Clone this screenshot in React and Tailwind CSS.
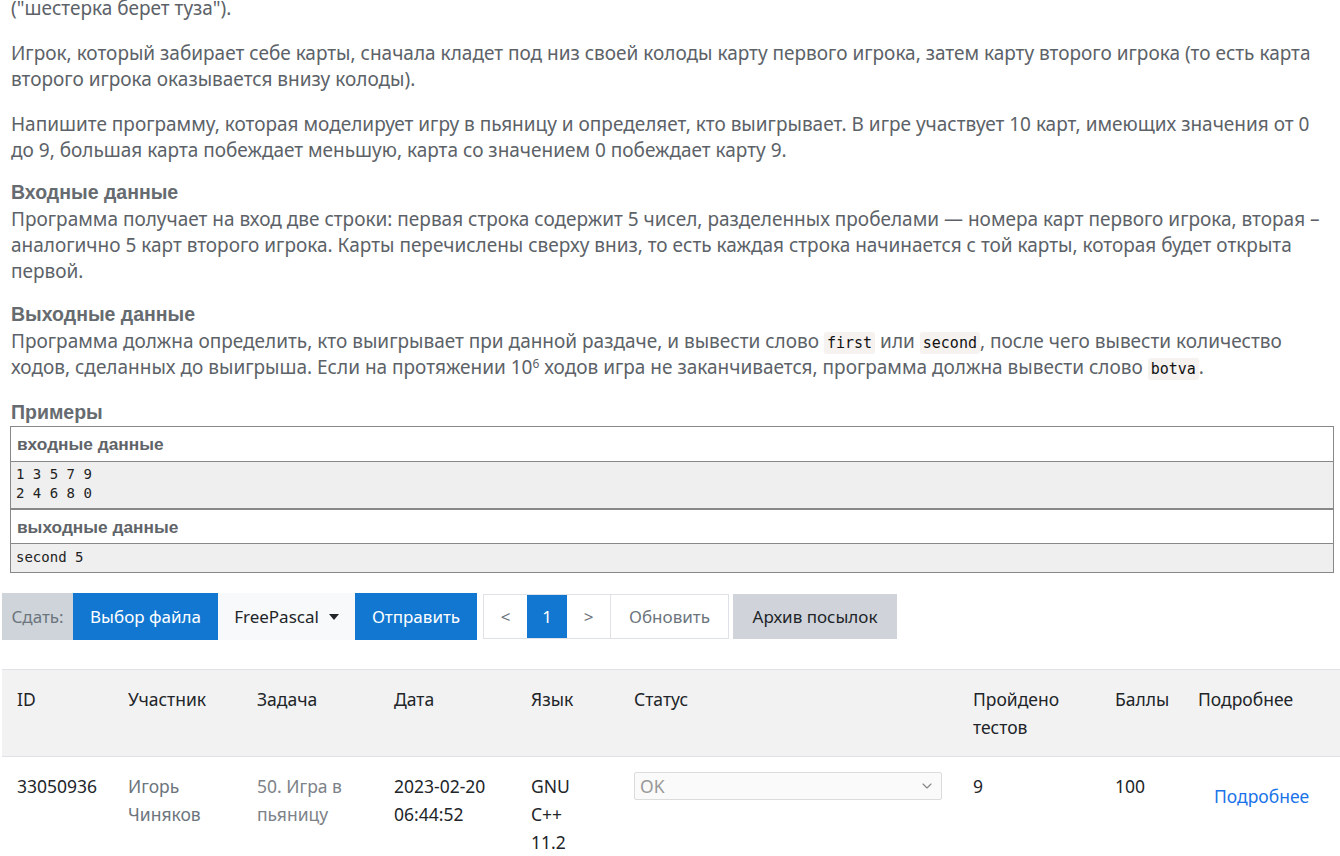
import { ChevronDown } from 'lucide-react'

const ui = { fontFamily: '"Noto Sans", "Open Sans", sans-serif' }
const heading = { fontFamily: '"Liberation Sans", Arial, sans-serif' }
const mono = { fontFamily: '"DejaVu Sans Mono", "Liberation Mono", monospace' }

const cols = 'grid grid-cols-[111px_129px_137px_137px_103px_339px_142px_83px_1fr]'

function Code({ children }) {
  return (
    <code className="bg-[#f5f2f0] text-[#111] rounded-[3px] px-[3px] py-[2px] text-[15px] leading-none" style={mono}>
      {children}
    </code>
  )
}

export default function App() {
  return (
    <div className="bg-white w-[1340px] h-[856px] overflow-hidden" style={ui}>
      {/* Statement */}
      <div className="px-[11px] text-[19px] leading-[26px] text-[#5c6268]">
        <p className="mt-[-5px]">("шестерка берет туза").</p>
        <p className="mt-[19px]">
          Игрок, который забирает себе карты, сначала кладет под низ своей колоды карту первого игрока, затем карту второго игрока (то есть карта второго игрока оказывается внизу колоды).
        </p>
        <p className="mt-[19px]">
          Напишите программу, которая моделирует игру в пьяницу и определяет, кто выигрывает. В игре участвует 10 карт, имеющих значения от 0 до 9, большая карта побеждает меньшую, карта со значением 0 побеждает карту 9.
        </p>

        <h3 className="mt-[16px] text-[19.5px] font-bold text-[#666b70]" style={heading}>Входные данные</h3>
        <p className="mt-[1px]">
          Программа получает на вход две строки: первая строка содержит 5 чисел, разделенных пробелами — номера карт первого игрока, вторая – аналогично 5 карт второго игрока. Карты перечислены сверху вниз, то есть каждая строка начинается с той карты, которая будет открыта первой.
        </p>

        <h3 className="mt-[17px] text-[19.5px] font-bold text-[#666b70]" style={heading}>Выходные данные</h3>
        <p className="mt-[1px]">
          Программа должна определить, кто выигрывает при данной раздаче, и вывести слово <Code>first</Code> или <Code>second</Code>, после чего вывести количество ходов, сделанных до выигрыша. Если на протяжении 10<sup className="text-[12px]">6</sup> ходов игра не заканчивается, программа должна вывести слово <Code>botva</Code>.
        </p>

        <h3 className="mt-[19px] text-[19.5px] font-bold text-[#666b70]" style={heading}>Примеры</h3>

        {/* Example box */}
        <div className="mt-[1px] -ml-[1px] w-[1324px] border border-[#888]">
          <div className="h-[35px] flex items-center px-[6px] border-b border-[#888] text-[17.3px] font-bold text-[#5f6469]" style={heading}>
            входные данные
          </div>
          <pre className="bg-[#efefef] px-[5px] pt-[3px] pb-[5px] leading-[19px] text-[14px] text-[#222] border-b-2 border-[#888]" style={mono}>
{`1 3 5 7 9
2 4 6 8 0`}
          </pre>
          <div className="h-[34px] flex items-center px-[6px] border-b border-[#888] text-[17.3px] font-bold text-[#5f6469]" style={heading}>
            выходные данные
          </div>
          <pre className="bg-[#efefef] px-[5px] pt-[4px] pb-[5px] leading-[19px] text-[14px] text-[#222]" style={mono}>
            second 5
          </pre>
        </div>
      </div>

      {/* Submit toolbar */}
      <div className="mt-[20px] ml-[2px] flex items-center text-[17px]">
        <div className="h-[47px] w-[71px] flex items-center justify-center bg-[#ced4da] text-[#6c757d]">Сдать:</div>
        <div className="h-[47px] w-[145px] flex items-center justify-center bg-[#1177d1] text-white">Выбор файла</div>
        <div className="h-[47px] w-[137px] flex items-center justify-center gap-[10px] bg-[#f8f9fa] text-[#212529]">
          FreePascal
          <span className="w-0 h-0 border-l-[5px] border-r-[5px] border-t-[6px] border-l-transparent border-r-transparent border-t-[#212529]" />
        </div>
        <div className="h-[47px] w-[122px] flex items-center justify-center bg-[#1177d1] text-white">Отправить</div>

        <div className="ml-[6px] h-[45px] flex border border-[#dee2e6]">
          <div className="w-[43px] flex items-center justify-center text-[#6c757d]">&lt;</div>
          <div className="w-[40px] flex items-center justify-center bg-[#1177d1] text-white">1</div>
          <div className="w-[44px] flex items-center justify-center text-[#6c757d] border-r border-[#dee2e6]">&gt;</div>
          <div className="w-[117px] flex items-center justify-center text-[#6c757d]">Обновить</div>
        </div>

        <div className="ml-[4px] h-[45px] w-[164px] flex items-center justify-center bg-[#d0d4da] text-[#212529]">Архив посылок</div>
      </div>

      {/* Submissions table */}
      <div className="mt-[29px] ml-[2px] text-[17.5px] leading-[28px] text-[#212529]">
        <div className={`${cols} bg-[#f2f2f2] border-t border-b border-[#dee2e6] pt-[15px] pb-[15px]`}>
          <div className="px-[15px]">ID</div>
          <div className="px-[15px]">Участник</div>
          <div className="px-[15px]">Задача</div>
          <div className="px-[15px]">Дата</div>
          <div className="px-[15px]">Язык</div>
          <div className="px-[15px]">Статус</div>
          <div className="px-[15px]">Пройдено тестов</div>
          <div className="px-[15px]">Баллы</div>
          <div className="px-[15px]">Подробнее</div>
        </div>
        <div className={`${cols} pt-[15px]`}>
          <div className="px-[15px]">33050936</div>
          <div className="px-[15px] text-[#6c757d]">Игорь Чиняков</div>
          <div className="px-[15px] text-[#7d8288]">50. Игра в пьяницу</div>
          <div className="px-[15px]">2023-02-20 06:44:52</div>
          <div className="px-[15px]">
            <span className="block w-[50px]">GNU C++ 11.2</span>
          </div>
          <div className="px-[15px]">
            <div className="w-[308px] h-[28px] flex items-center justify-between pl-[5px] pr-[6px] border border-[#dcdcdc] rounded-[2px] bg-[#fafafa] text-[#999]">
              <span>OK</span>
              <ChevronDown size={16} strokeWidth={1.75} className="text-[#888]" />
            </div>
          </div>
          <div className="px-[15px]">9</div>
          <div className="px-[15px]">100</div>
          <div className="px-[15px]">
            <a className="block mt-[10px] ml-[16px] text-[#1a73e8]">Подробнее</a>
          </div>
        </div>
      </div>
    </div>
  )
}
